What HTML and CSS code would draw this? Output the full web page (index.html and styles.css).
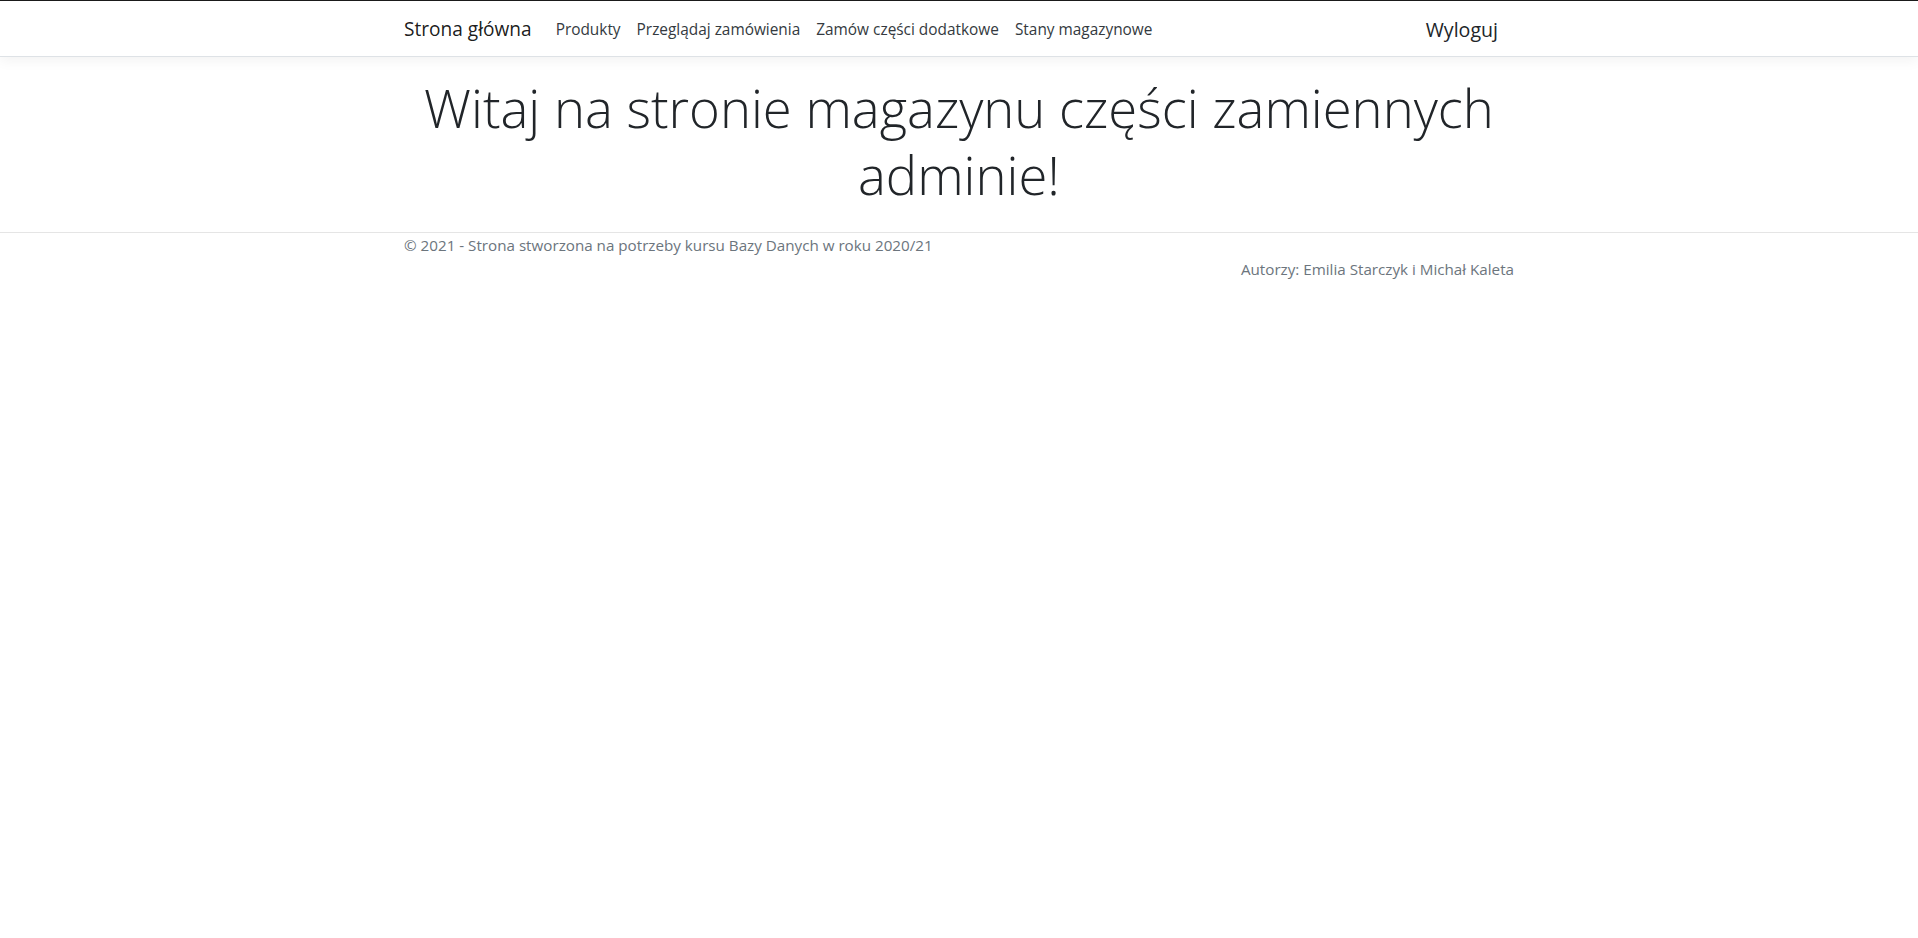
FILE: index.html
```html
<!DOCTYPE html>
<html lang="pl">
<head>
<meta charset="utf-8">
<title>Strona główna</title>
<link rel="stylesheet" href="styles.css">
</head>
<body>
<header>
  <nav class="navbar">
    <div class="container nav-inner">
      <a class="brand" href="#">Strona główna</a>
      <ul class="nav-links">
        <li><a class="nav-link" href="#">Produkty</a></li>
        <li><a class="nav-link" href="#">Przeglądaj zamówienia</a></li>
        <li><a class="nav-link" href="#">Zamów części dodatkowe</a></li>
        <li><a class="nav-link" href="#">Stany magazynowe</a></li>
      </ul>
      <a class="logout" href="#">Wyloguj</a>
    </div>
  </nav>
</header>
<div class="container">
  <main class="main">
    <div class="text-center">
      <h1 class="display">Witaj na stronie magazynu części zamiennych adminie!</h1>
    </div>
  </main>
</div>
<footer class="footer">
  <div class="container">
    <div class="copy">© 2021 - Strona stworzona na potrzeby kursu Bazy Danych w roku 2020/21</div>
    <div class="authors">Autorzy: Emilia Starczyk i Michał Kaleta</div>
  </div>
</footer>
</body>
</html>
```

FILE: styles.css
```css
* { box-sizing: border-box; }
html { font-size: 16px; }
body {
  margin: 0;
  font-family: "Open Sans", "Noto Sans", "Liberation Sans", sans-serif;
  font-size: 1rem;
  line-height: 1.5;
  color: #212529;
  background: #fff;
  border-top: 1px solid #1a1a1a;
}
a { text-decoration: none; }
.container {
  width: 1140px;
  margin: 0 auto;
  padding: 0 15px;
}
.navbar {
  height: 56px;
  padding-top: 2px;
  background: #fff;
  border-bottom: 1px solid #dee2e6;
  box-shadow: 0 4px 12px rgba(0,0,0,.05);
  margin-bottom: 16px;
}
.nav-inner {
  display: flex;
  align-items: center;
  height: 100%;
}
.brand {
  font-size: 19.1px;
  color: rgba(0,0,0,.9);
  margin-right: 16px;
  white-space: nowrap;
}
.nav-links {
  display: flex;
  list-style: none;
  margin: 0;
  padding: 0;
  flex: 1;
}
.nav-link {
  display: block;
  padding: 8px;
  font-size: 15.4px;
  color: #343a40;
  white-space: nowrap;
}
.logout {
  font-size: 19.6px;
  color: #212529;
  padding: 8px 16px 8px 8px;
}
.main { padding-bottom: 16px; }
.text-center { text-align: center; }
.display {
  margin: 0 0 8px;
  padding-top: 1px;
  font-size: 52.6px;
  font-weight: 300;
  line-height: 67px;
}
.footer {
  border-top: 1px solid #e5e5e5;
  color: #6c757d;
  font-size: 15.2px;
  line-height: 24px;
}
.authors { text-align: right; }
```
